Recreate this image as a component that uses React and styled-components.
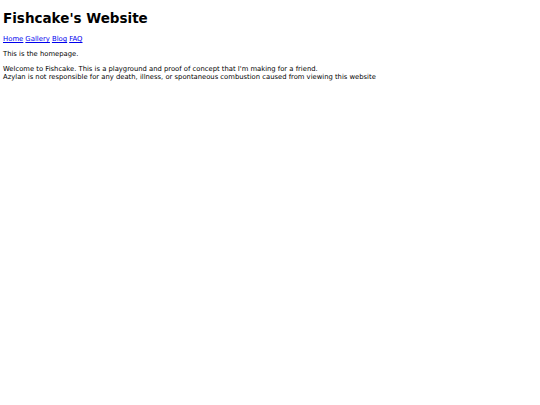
import React from "react";
import styled, { createGlobalStyle } from "styled-components";

const GlobalStyle = createGlobalStyle`
  html, body {
    margin: 0;
    padding: 0;
    background: #fff;
  }
  body {
    font-family: "DejaVu Sans", Verdana, sans-serif;
    color: #000;
  }
`;

const Page = styled.div`
  padding: 6px 3px;
`;

const Title = styled.h1`
  font-size: 13.5px;
  line-height: 16px;
  font-weight: bold;
  margin: 4px 0 9px;
`;

const Nav = styled.nav`
  display: flex;
  gap: 2px;
  font-size: 6.9px;
  line-height: 8px;
  margin-bottom: 7px;
`;

const NavLink = styled.a`
  color: #0000ee;
  text-decoration: underline;
`;

const Text = styled.p`
  font-size: 6.8px;
  line-height: 8px;
  margin: 0 0 7px;
`;

const links = ["Home", "Gallery", "Blog", "FAQ"];

export default function App() {
  return (
    <>
      <GlobalStyle />
      <Page>
        <Title>Fishcake's Website</Title>
        <Nav>
          {links.map((l) => (
            <NavLink key={l} href="#">
              {l}
            </NavLink>
          ))}
        </Nav>
        <Text>This is the homepage.</Text>
        <Text>
          Welcome to Fishcake. This is a playground and proof of concept that I'm making for a friend.
          <br />
          Azylan is not responsible for any death, illness, or spontaneous combustion caused from viewing this website
        </Text>
      </Page>
    </>
  );
}
